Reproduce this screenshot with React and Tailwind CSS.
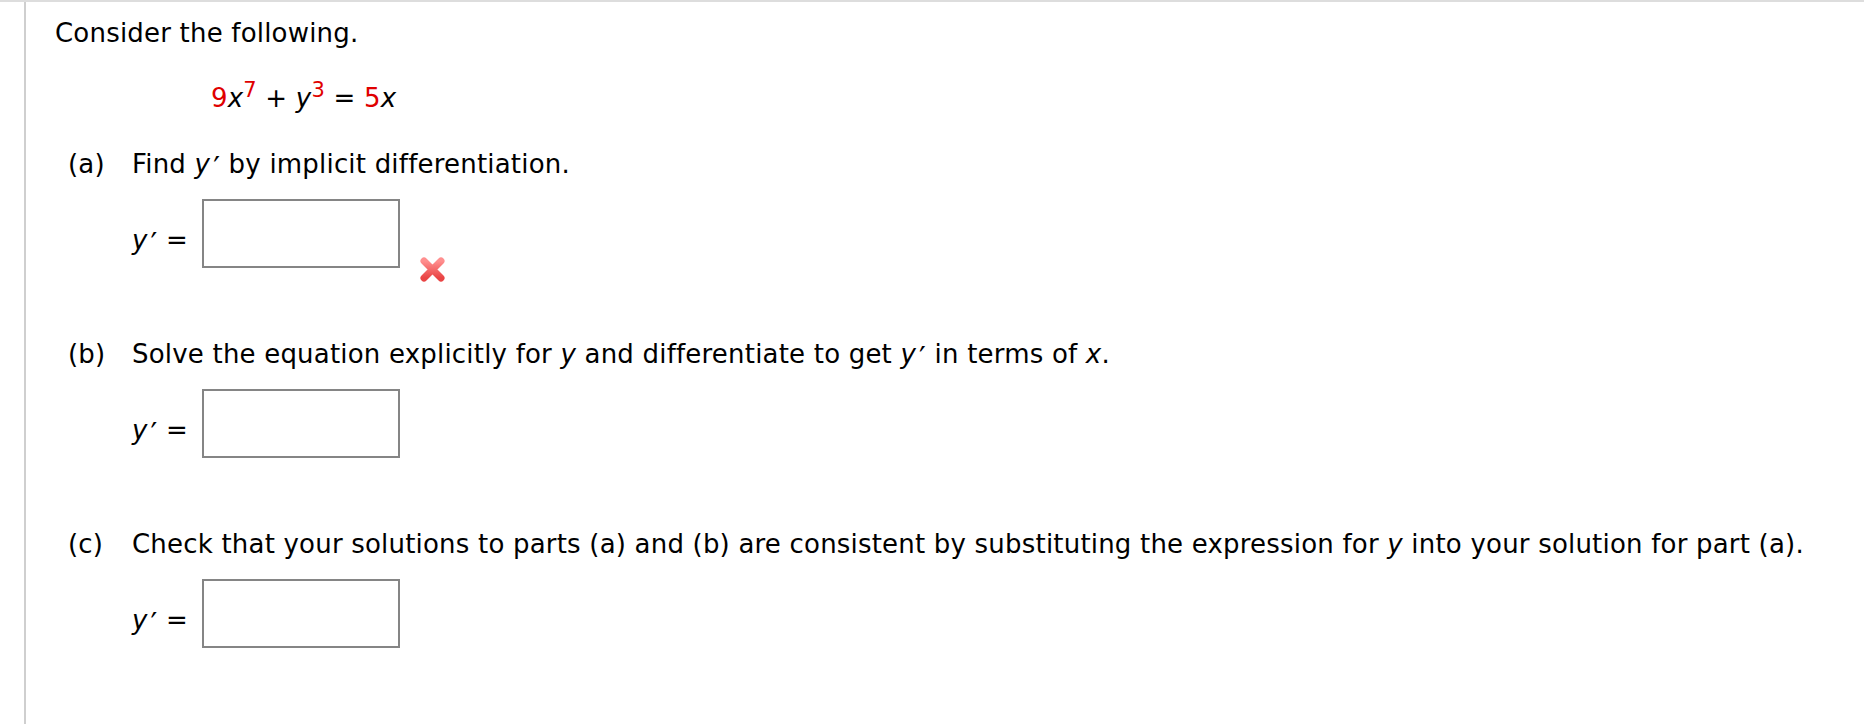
import React from 'react';

const Red = ({ children }) => <span className="text-[#e00000]">{children}</span>;
const V = ({ children }) => <i className="italic">{children}</i>;
const Prime = () => (
  <span className="relative top-[5px] text-[30px] leading-[26px] ml-[3px]">′</span>
);

const WrongMark = () => (
  <svg width="27" height="27" viewBox="0 0 27 27" className="mt-[57px] -mb-[15px] ml-[19px] shrink-0">
    <defs>
      <linearGradient id="xg" x1="0" y1="0" x2="0" y2="1">
        <stop offset="0" stopColor="#ff8f8f" />
        <stop offset="1" stopColor="#e94444" />
      </linearGradient>
    </defs>
    <path d="M5 5 L22 22 M22 5 L5 22" stroke="url(#xg)" strokeWidth="7" strokeLinecap="round" />
  </svg>
);

const AnswerBox = () => (
  <div className="w-[198px] h-[69px] border-2 border-[#858585] bg-white shrink-0" />
);

const Part = ({ label, children, wrong }) => (
  <div className="pl-[13px] mb-[71px]">
    <div className="flex h-[30px] leading-[30px]">
      <span className="w-[64px] shrink-0">({label})</span>
      <span>{children}</span>
    </div>
    <div className="flex mt-[20px] ml-[64px]">
      <div className="w-[70px] h-[69px] pt-[12px] flex items-center shrink-0">
        <span className="leading-[30px]">
          <V>y</V>
          <Prime /> =
        </span>
      </div>
      <AnswerBox />
      {wrong && <WrongMark />}
    </div>
  </div>
);

export default function App() {
  return (
    <div
      className="w-full h-[724px] bg-white border-t-2 border-[#dddddd] text-black text-[26px] tracking-[0.2px] overflow-hidden"
      style={{ fontFamily: '"DejaVu Sans", Verdana, sans-serif' }}
    >
      <div className="ml-[24px] h-full border-l-2 border-[#cfcfcf] pl-[29px] pt-[16px]">
        <div className="h-[30px] leading-[30px]">Consider the following.</div>
        <div className="mt-[35px] ml-[156px] h-[30px] leading-[30px]">
          <Red>9</Red>
          <V>x</V>
          <sup className="text-[21px] top-[-10px]"><Red>7</Red></sup>&nbsp;+ <V>y</V>
          <sup className="text-[21px] top-[-10px]"><Red>3</Red></sup>&nbsp;= <Red>5</Red>
          <V>x</V>
        </div>
        <div className="mt-[36px]">
          <Part label="a" wrong>
            Find <V>y</V>
            <Prime /> by implicit differentiation.
          </Part>
          <Part label="b">
            Solve the equation explicitly for <V>y</V> and differentiate to get <V>y</V>
            <Prime /> in terms of <V>x</V>.
          </Part>
          <Part label="c">
            Check that your solutions to parts (a) and (b) are consistent by substituting the
            expression for <V>y</V> into your solution for part (a).
          </Part>
        </div>
      </div>
    </div>
  );
}
